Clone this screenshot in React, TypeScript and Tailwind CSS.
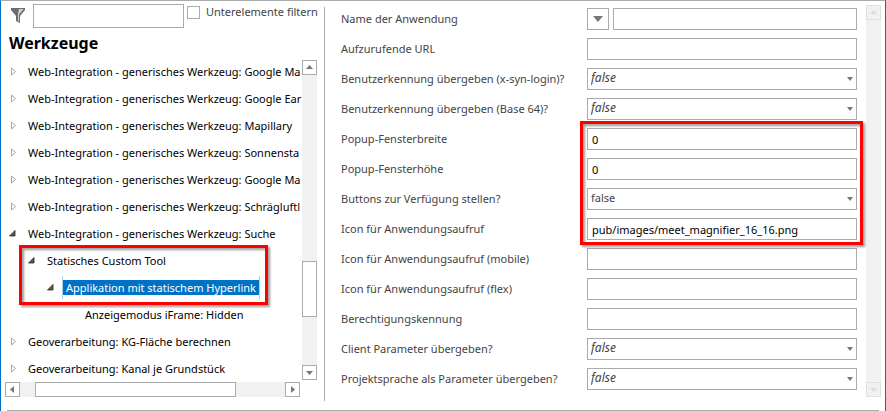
import { useId, useState } from "react";
import clsx from "clsx";

type TreeNode = {
  label: string;
  level: number;
  state: "open" | "closed" | "leaf";
};

type Field = {
  label: string;
  kind: "text" | "select" | "picker";
  value?: string;
  inherited?: boolean;
};

const TOP_NODES: TreeNode[] = [
  { label: "Web-Integration - generisches Werkzeug: Google Ma", level: 1, state: "closed" },
  { label: "Web-Integration - generisches Werkzeug: Google Ear", level: 1, state: "closed" },
  { label: "Web-Integration - generisches Werkzeug: Mapillary", level: 1, state: "closed" },
  { label: "Web-Integration - generisches Werkzeug: Sonnensta", level: 1, state: "closed" },
  { label: "Web-Integration - generisches Werkzeug: Google Ma", level: 1, state: "closed" },
  { label: "Web-Integration - generisches Werkzeug: Schrägluftl", level: 1, state: "closed" },
  { label: "Web-Integration - generisches Werkzeug: Suche", level: 1, state: "open" },
];

const MARKED_NODES: TreeNode[] = [
  { label: "Statisches Custom Tool", level: 2, state: "open" },
  { label: "Applikation mit statischem Hyperlink", level: 3, state: "open" },
];

const BOTTOM_NODES: TreeNode[] = [
  { label: "Anzeigemodus iFrame: Hidden", level: 4, state: "leaf" },
  { label: "Geoverarbeitung: KG-Fläche berechnen", level: 1, state: "closed" },
  { label: "Geoverarbeitung: Kanal je Grundstück", level: 1, state: "closed" },
];

const TOP_FIELDS: Field[] = [
  { label: "Name der Anwendung", kind: "picker" },
  { label: "Aufzurufende URL", kind: "text" },
  { label: "Benutzerkennung übergeben (x-syn-login)?", kind: "select", inherited: true },
  { label: "Benutzerkennung übergeben (Base 64)?", kind: "select", inherited: true },
];

const MARKED_FIELDS: Field[] = [
  { label: "Popup-Fensterbreite", kind: "text", value: "0" },
  { label: "Popup-Fensterhöhe", kind: "text", value: "0" },
  { label: "Buttons zur Verfügung stellen?", kind: "select" },
  { label: "Icon für Anwendungsaufruf", kind: "text", value: "pub/images/meet_magnifier_16_16.png" },
];

const BOTTOM_FIELDS: Field[] = [
  { label: "Icon für Anwendungsaufruf (mobile)", kind: "text" },
  { label: "Icon für Anwendungsaufruf (flex)", kind: "text" },
  { label: "Berechtigungskennung", kind: "text" },
  { label: "Client Parameter übergeben?", kind: "select", inherited: true },
  { label: "Projektsprache als Parameter übergeben?", kind: "select", inherited: true },
];

const INDENT = ["", "pl-0", "pl-[19px]", "pl-[38px]", "pl-[57px]"];

export default function App() {
  const [selected, setSelected] = useState("Applikation mit statischem Hyperlink");

  const renderNode = (node: TreeNode, i: number) => (
    <TreeRow
      key={i}
      node={node}
      selected={node.label === selected}
      onSelect={() => setSelected(node.label)}
    />
  );

  return (
    <div className="border-x border-t border-x-[#0072c6] border-t-[#ababab] bg-white font-['Noto_Sans','Segoe_UI',sans-serif] text-[11px] text-black">
      <div className="flex">
        <aside className="w-[316px] shrink-0 pt-[3px]">
          <div className="flex h-6 pl-2">
            <FilterIcon />
            <input
              type="text"
              aria-label="Filter"
              className="ml-2 h-6 w-[151px] border border-[#ababab] px-1 outline-none"
            />
            <label className="ml-[3px] flex h-4 items-center gap-[6px] whitespace-nowrap text-[#444]">
              <input
                type="checkbox"
                className="size-[13px] appearance-none border border-[#ababab] bg-white checked:bg-[#0072c6]"
              />
              Unterelemente filtern
            </label>
          </div>

          <h1 className="pl-2 text-base leading-[30px] font-bold">Werkzeuge</h1>

          <div className="flex">
            <div role="tree" aria-label="Werkzeuge" className="min-w-0 flex-1 pl-[7px]">
              {TOP_NODES.map(renderNode)}
              <div className="relative">
                {MARKED_NODES.map(renderNode)}
                <div className="pointer-events-none absolute -top-[2px] -bottom-1 left-[11px] w-[249px] border-3 border-[#f00] drop-shadow-[2px_2px_1px_rgba(0,0,0,0.4)]" />
              </div>
              {BOTTOM_NODES.map(renderNode)}
            </div>
            <div className="my-[2px] flex w-[15px] flex-col bg-[#f1f1f1]">
              <ScrollButton direction="up" />
              <div className="flex-1" />
              <div className="h-14 border border-[#ababab] bg-white" />
              <div className="h-12" />
              <ScrollButton direction="down" />
            </div>
          </div>

          <div className="mr-[17px] ml-1 flex h-[15px] bg-[#f1f1f1]">
            <ScrollButton direction="left" />
            <div className="ml-[15px] w-[201px] border border-[#ababab] bg-white" />
            <div className="flex-1" />
            <ScrollButton direction="right" />
          </div>
        </aside>

        <div className="mt-[6px] -mb-1 ml-[7px] w-px bg-[#ababab]" />

        <form className="flex min-w-0 flex-1 flex-col gap-2 pt-[7px] pl-4">
          {TOP_FIELDS.map((field) => (
            <FieldRow key={field.label} field={field} />
          ))}
          <div className="relative flex flex-col gap-2">
            {MARKED_FIELDS.map((field) => (
              <FieldRow key={field.label} field={field} />
            ))}
            <div className="pointer-events-none absolute -top-[7px] -right-[6px] -bottom-[5px] left-[239px] border-3 border-[#f00] drop-shadow-[2px_2px_1px_rgba(0,0,0,0.4)]" />
          </div>
          {BOTTOM_FIELDS.map((field) => (
            <FieldRow key={field.label} field={field} />
          ))}
        </form>

        <div className="mt-1 mr-1 ml-[9px] flex w-[15px] flex-col justify-between bg-[#f1f1f1]">
          <ScrollButton direction="up" disabled />
          <ScrollButton direction="down" disabled />
        </div>
      </div>
      <div className="mx-[6px] mt-[13px] border-t border-[#ababab]" />
    </div>
  );
}

function TreeRow({
  node,
  selected,
  onSelect,
}: {
  node: TreeNode;
  selected: boolean;
  onSelect: () => void;
}) {
  return (
    <div
      role="treeitem"
      aria-level={node.level}
      aria-selected={selected}
      aria-expanded={node.state === "leaf" ? undefined : node.state === "open"}
      onClick={onSelect}
      className={clsx("flex h-[27px] items-center overflow-hidden whitespace-nowrap", INDENT[node.level])}
    >
      <span className="w-[17px] shrink-0">
        {node.state === "closed" && (
          <svg width="9" height="9" viewBox="0 0 9 9" className="block">
            <path d="M3.500 1v7L7.500 4.500z" fill="#fff" stroke="#a6a6a6" />
          </svg>
        )}
        {node.state === "open" && (
          <svg width="9" height="9" viewBox="0 0 9 9" className="block">
            <path d="M7 1.500V7H1.500z" fill="#595959" stroke="#262626" strokeWidth="0.8" />
          </svg>
        )}
      </span>
      {selected ? (
        <span className="-ml-px flex h-[23px] items-center border-x border-[#a8d2f0]">
          <span className="h-[15px] bg-[#0072c6] px-[3px] leading-[15px] text-white">{node.label}</span>
        </span>
      ) : (
        <span className="pl-[3px] leading-4">{node.label}</span>
      )}
    </div>
  );
}

function FieldRow({ field }: { field: Field }) {
  const id = useId();

  return (
    <div className="flex h-[22px] items-center">
      <label htmlFor={id} className="w-[246px] shrink-0 whitespace-nowrap text-[#444]">
        {field.label}
      </label>
      {field.kind === "select" ? (
        <div className="relative min-w-0 flex-1">
          <select
            id={id}
            className={clsx(
              "block h-[22px] w-full appearance-none border border-[#ababab] bg-white pr-4 pb-[2px] pl-[3px] text-[#444] outline-none",
              field.inherited && "text-xs italic",
            )}
          >
            <option>false</option>
            <option>true</option>
          </select>
          <svg width="6" height="4" viewBox="0 0 6 4" className="pointer-events-none absolute top-[9px] right-1">
            <path d="M0 0h6L3 4z" fill="#777" />
          </svg>
        </div>
      ) : (
        <>
          {field.kind === "picker" && (
            <button
              type="button"
              aria-label="Auswahl"
              className="mr-1 flex size-[22px] shrink-0 items-center justify-center border border-[#ababab] bg-white"
            >
              <svg width="10" height="6" viewBox="0 0 10 6">
                <path d="M0 0h10L5 6z" fill="#777" />
              </svg>
            </button>
          )}
          <input
            id={id}
            type="text"
            defaultValue={field.value}
            className="h-[22px] min-w-0 flex-1 border border-[#ababab] bg-white px-1 outline-none"
          />
        </>
      )}
    </div>
  );
}

const ARROWS = {
  up: "M1 6h7L4.5 2z",
  down: "M1 3h7L4.5 7z",
  left: "M6 1v7L2 4.5z",
  right: "M3 1v7L7 4.5z",
};

function ScrollButton({
  direction,
  disabled = false,
}: {
  direction: keyof typeof ARROWS;
  disabled?: boolean;
}) {
  return (
    <button
      type="button"
      aria-label={direction}
      disabled={disabled}
      className={clsx(
        "flex size-[15px] shrink-0 items-center justify-center border",
        disabled ? "border-[#e1e1e1] bg-[#f1f1f1] text-[#dcdcdc]" : "border-[#ababab] bg-white text-[#777]",
      )}
    >
      <svg width="9" height="9" viewBox="0 0 9 9">
        <path d={ARROWS[direction]} fill="currentColor" />
      </svg>
    </button>
  );
}

function FilterIcon() {
  return (
    <svg width="16" height="16" viewBox="0 0 16 16" className="mt-1 block shrink-0">
      <path d="M2 0h14v2l-5 6v7L7 13V8L2 2z" fill="#6d6d6d" />
      <path d="M10 1h4.500L10 6.500V13H9V6z" fill="#fff" opacity=".7" />
    </svg>
  );
}
